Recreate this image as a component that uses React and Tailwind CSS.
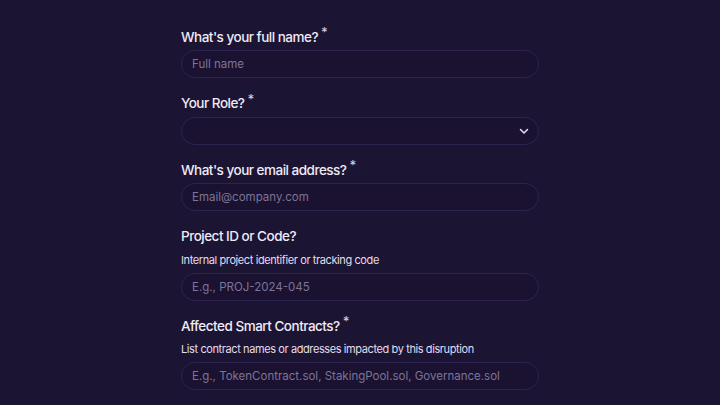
import React from 'react'

function Label({ text, required }){
  return (
    <div className="h-5 flex items-center text-[13.5px] font-medium text-[#efebf6] tracking-[-0.5px]">
      {text}
      {required && <span className="ml-[3px] -mt-[8px] text-[13px] text-[#cfc8e0]">*</span>}
    </div>
  )
}

function Field({ label, required, desc, placeholder, select }){
  return (
    <div className="flex flex-col">
      <Label text={label} required={required} />
      {desc && <div className="mt-[4px] leading-[18px] text-[11px] tracking-[-0.4px] text-[#e2dded]">{desc}</div>}
      <div className={(desc ? 'mt-[4px] ' : 'mt-[3px] ') + 'h-7 rounded-full border border-[#2d2352] bg-[#1a1230] flex items-center px-[10px]'}>
        {placeholder && <span className="mt-[2px] text-[11.5px] text-[#7d7498]">{placeholder}</span>}
        {select && (
          <svg className="ml-auto -mr-[2px]" width="12" height="12" viewBox="0 0 24 24" fill="none" stroke="#e6e1f0" strokeWidth="3" strokeLinecap="round" strokeLinejoin="round">
            <path d="M5 9l7 7 7-7" />
          </svg>
        )}
      </div>
    </div>
  )
}

export default function App(){
  return (
    <div className="w-[720px] h-[405px] overflow-hidden bg-[#1c1433]" style={{ fontFamily: 'Inter, "Noto Sans", sans-serif' }}>
      <div className="w-[358px] mx-auto pt-[27px] flex flex-col gap-[15.5px]">
        <Field label="What's your full name?" required placeholder="Full name" />
        <Field label="Your Role?" required select />
        <Field label="What's your email address?" required placeholder="Email@company.com" />
        <Field label="Project ID or Code?" desc="Internal project identifier or tracking code" placeholder="E.g., PROJ-2024-045" />
        <Field label="Affected Smart Contracts?" required desc="List contract names or addresses impacted by this disruption" placeholder="E.g., TokenContract.sol, StakingPool.sol, Governance.sol" />
      </div>
    </div>
  )
}
